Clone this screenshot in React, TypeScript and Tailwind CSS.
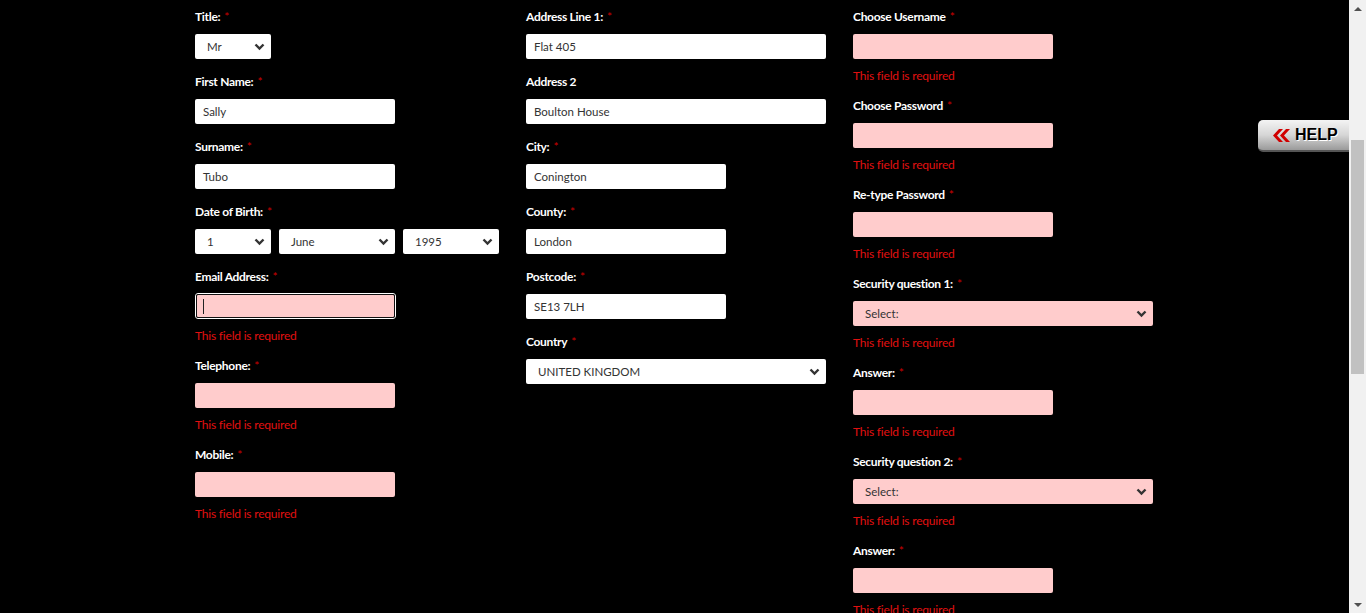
import React from "react";

const font = { fontFamily: "Lato, 'Open Sans', sans-serif" };

function Chevron() {
  return (
    <svg className="pointer-events-none absolute right-[6px] top-1/2 -translate-y-1/2" width="11" height="8" viewBox="0 0 11 8">
      <path d="M1.5 1.5 L5.5 5.5 L9.5 1.5" fill="none" stroke="#333" strokeWidth="2.4" />
    </svg>
  );
}

function Label({ text, req = true, colon = true }: { text: string; req?: boolean; colon?: boolean }) {
  return (
    <div className="h-[17px] text-[12px] leading-[15px] font-bold text-white tracking-[-0.3px]">
      {text}
      {colon ? ":" : ""}
      {req && <span className="ml-[4px] font-normal text-[#c00]">*</span>}
    </div>
  );
}

function Err({ mt = "mt-[9px]" }: { mt?: string }) {
  return <div className={`${mt} h-[17px] text-[12px] leading-[15px] text-[#e01010] tracking-[-0.2px]`}>This field is required</div>;
}

function Input({ value = "", w, error = false }: { value?: string; w: string; error?: boolean }) {
  return (
    <div
      className={`${w} mt-[8px] h-[25px] rounded-[2px] px-[8px] text-[11.5px] leading-[25px] text-[#333] ${
        error ? "bg-[#ffcccc]" : "bg-white"
      }`}
    >
      {value}
    </div>
  );
}

function Select({ value, w, error = false }: { value: string; w: string; error?: boolean }) {
  return (
    <div
      className={`relative ${w} h-[25px] rounded-[2px] pl-[12px] text-[11.5px] leading-[25px] text-[#333] ${
        error ? "bg-[#ffcccc]" : "bg-white"
      }`}
    >
      {value}
      <Chevron />
    </div>
  );
}

function Field({
  label,
  req = true,
  colon = true,
  value,
  w = "w-[200px]",
  error = false,
  select = false,
}: {
  label: string;
  req?: boolean;
  colon?: boolean;
  value?: string;
  w?: string;
  error?: boolean;
  select?: boolean;
}) {
  return (
    <div className={error ? "pb-[13px]" : "pb-[15px]"}>
      <Label text={label} req={req} colon={colon} />
      {select ? (
        <div className="mt-[8px]">
          <Select value={value || ""} w={w} error={error} />
        </div>
      ) : (
        <Input value={value} w={w} error={error} />
      )}
      {error && <Err />}
    </div>
  );
}

export default function App() {
  return (
    <div className="flex h-[613px] w-full overflow-hidden bg-black" style={font}>
      <div className="relative flex-1 overflow-hidden">
        <div className="grid grid-cols-[331px_327px_1fr] pl-[195px] pt-[9px]">
          {/* column 1 */}
          <div>
            <Field label="Title" select value="Mr" w="w-[76px]" />
            <Field label="First Name" value="Sally" />
            <Field label="Surname" value="Tubo" />
            <div className="pb-[15px]">
              <Label text="Date of Birth" />
              <div className="mt-[8px] flex gap-[8px]">
                <Select value="1" w="w-[76px]" />
                <Select value="June" w="w-[116px]" />
                <Select value="1995" w="w-[96px]" />
              </div>
            </div>
            <div className="pb-[13px]">
              <Label text="Email Address" />
              <div className="mt-[7px] h-[26px] w-[201px] rounded-[3px] border border-white p-0">
                <div className="flex h-full items-center rounded-[2px] border-[1.5px] border-[#111] bg-[#ffcccc] pl-[6px]">
                  <div className="h-[15px] w-[1px] bg-[#222]" />
                </div>
              </div>
              <Err mt="mt-[9px]" />
            </div>
            <Field label="Telephone" error />
            <Field label="Mobile" error />
          </div>

          {/* column 2 */}
          <div>
            <Field label="Address Line 1" value="Flat 405" w="w-[300px]" />
            <Field label="Address 2" req={false} colon={false} value="Boulton House" w="w-[300px]" />
            <Field label="City" value="Conington" />
            <Field label="County" value="London" />
            <Field label="Postcode" value="SE13 7LH" />
            <Field label="Country" colon={false} select value="UNITED KINGDOM" w="w-[300px]" />
          </div>

          {/* column 3 */}
          <div>
            <Field label="Choose Username" colon={false} error />
            <Field label="Choose Password" colon={false} error />
            <Field label="Re-type Password" colon={false} error />
            <Field label="Security question 1" select value="Select:" w="w-[300px]" error />
            <Field label="Answer" error />
            <Field label="Security question 2" select value="Select:" w="w-[300px]" error />
            <Field label="Answer" error />
          </div>
        </div>

        {/* help tab */}
        <div className="absolute right-0 top-[120px] flex h-[32px] w-[91px] items-center rounded-l-[5px] border-b-[2px] border-[#555] bg-gradient-to-b from-[#f4f4f4] via-[#d6d6d6] to-[#9a9a9a] pl-[15px]">
          <svg width="18" height="13" viewBox="0 0 18 13">
            <path d="M6 0 L10 0 L4 6.5 L10 13 L6 13 L0 6.5 Z" fill="#d10000" />
            <path d="M13 0 L17 0 L11 6.5 L17 13 L13 13 L7 6.5 Z" fill="#d10000" />
          </svg>
          <span
            className="ml-[4px] text-[16px] font-black leading-none text-black"
            style={{ fontFamily: "'Liberation Sans', Arial, sans-serif", textShadow: "1px 1px 0 #fff" }}
          >
            HELP
          </span>
        </div>
      </div>

      {/* scrollbar */}
      <div className="flex h-[613px] w-[17px] flex-col items-center bg-[#f1f1f1]">
        <div className="flex h-[17px] items-center justify-center">
          <svg width="8" height="4" viewBox="0 0 8 4">
            <path d="M0 4 L4 0 L8 4 Z" fill="#505050" />
          </svg>
        </div>
        <div className="mt-[123px] h-[234px] w-[13px] bg-[#c1c1c1]" />
        <div className="flex-1" />
        <div className="flex h-[17px] items-center justify-center">
          <svg width="8" height="4" viewBox="0 0 8 4">
            <path d="M0 0 L8 0 L4 4 Z" fill="#505050" />
          </svg>
        </div>
      </div>
    </div>
  );
}
